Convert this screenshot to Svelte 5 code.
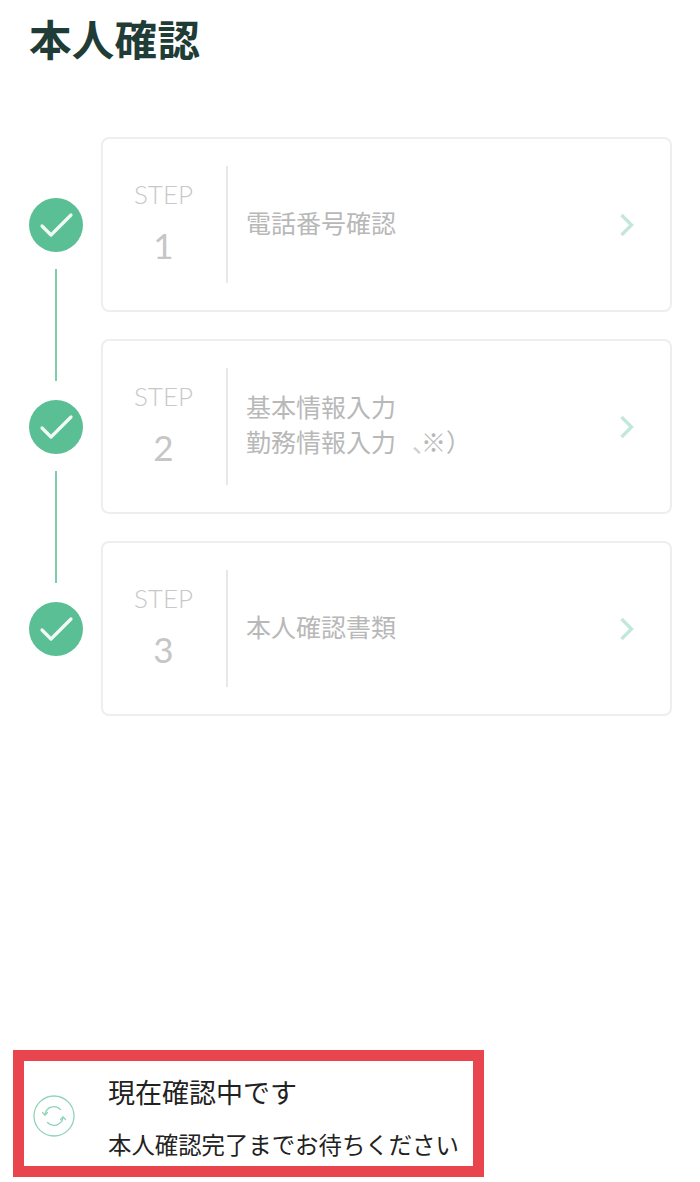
<script lang="ts">
  const steps = [
    { no: 1, lines: [{ text: '電話番号確認' }] },
    { no: 2, lines: [{ text: '基本情報入力' }, { text: '勤務情報入力', tail: '※）' }] },
    { no: 3, lines: [{ text: '本人確認書類' }] },
  ];
</script>

<div class="page">
  <h1>本人確認</h1>

  <ol class="steps">
    {#each steps as step, i}
      <li class="step" class:has-line={i < steps.length - 1}>
        <div class="mark">
          <div class="circle">
            <svg viewBox="0 0 54 54" fill="none"><path d="m13 28 9 9 20-20" stroke="#f2faf6" stroke-width="3.2" stroke-linecap="round" stroke-linejoin="round"/></svg>
          </div>
        </div>
        <div class="card">
          <div class="num">
            <span class="label">STEP</span>
            <span class="digit">{step.no}</span>
          </div>
          <div class="name">
            {#each step.lines as line}
              <div>{line.text}{#if line.tail}<span class="rem">、</span>{line.tail}{/if}</div>
            {/each}
          </div>
          <svg class="chev" viewBox="0 0 16 24" fill="none"><path d="m2.5 2 10 10-10 10" stroke="#c3e8da" stroke-width="3.4"/></svg>
        </div>
      </li>
    {/each}
  </ol>

  <div class="status">
    <svg class="sync" viewBox="0 0 42 42" fill="none" stroke="#8fd3b8" stroke-width="1.3">
      <circle cx="21" cy="21" r="20"/>
      <path d="M12 20a9 9 0 0 1 15.5-5.5" stroke-linecap="round"/>
      <path d="M30 22a9 9 0 0 1-15.5 5.5" stroke-linecap="round"/>
      <path d="m9.5 17.5 2.5 2.5 2.5-2.5" stroke-linecap="round" stroke-linejoin="round"/>
      <path d="m27.5 24.5 2.5-2.5 2.5 2.5" stroke-linecap="round" stroke-linejoin="round"/>
    </svg>
    <div class="status-text">
      <div class="status-main">現在確認中です</div>
      <div class="status-sub">本人確認完了までお待ちください</div>
    </div>
  </div>
</div>

<style>
  :global(body) { background: #fff; }

  .page {
    height: 1182px;
    box-sizing: border-box;
    display: flex;
    flex-direction: column;
    font-family: "Noto Sans CJK JP", "Noto Sans", sans-serif;
    overflow: hidden;
  }

  h1 {
    margin: 0;
    padding: 10px 0 0 29px;
    font-size: 42.5px;
    line-height: 56px;
    font-weight: 700;
    letter-spacing: 0.3px;
    color: #1f3d36;
  }

  .steps {
    list-style: none;
    margin: 71px 0 0;
    padding: 0 28px 0 29px;
    display: flex;
    flex-direction: column;
    gap: 27px;
  }

  .step {
    position: relative;
    display: flex;
    align-items: center;
  }
  .has-line::after {
    content: '';
    position: absolute;
    left: 26px;
    top: 132px;
    width: 2px;
    height: 112px;
    background: #7fcbab;
  }

  .mark { width: 72px; flex: none; }
  .circle {
    width: 54px;
    height: 54px;
    border-radius: 50%;
    background: #5bbf95;
  }
  .circle svg { display: block; width: 54px; height: 54px; }

  .card {
    flex: 1;
    height: 175px;
    box-sizing: border-box;
    border: 2px solid #eeeeee;
    border-radius: 8px;
    display: flex;
    align-items: center;
    padding: 0 35px 0 0;
    background: #fff;
  }

  .num {
    width: 125px;
    height: 117px;
    flex: none;
    box-sizing: border-box;
    border-right: 2px solid #e8e8e8;
    display: flex;
    flex-direction: column;
    align-items: center;
    color: #c8c8c8;
  }
  .label {
    font-family: "Lato", sans-serif;
    font-weight: 300;
    font-size: 26px;
    line-height: 30px;
    margin-top: 13px;
    padding-right: 2px;
  }
  .digit {
    font-family: "Lato", sans-serif;
    font-size: 35px;
    line-height: 42px;
    margin-top: 15px;
    padding-right: 2px;
    color: #c6c6c6;
  }

  .name {
    flex: 1;
    padding: 0 0 5px 18px;
    font-size: 25px;
    line-height: 35px;
    color: #b8b8b8;
    font-weight: 400;
  }
  .rem {
    padding-left: 16px;
    letter-spacing: -16px;
    color: #cfcfcf;
  }

  .chev { width: 16px; height: 24px; flex: none; }

  .status {
    margin: auto 0 5px 13px;
    width: 471px;
    height: 127px;
    box-sizing: border-box;
    border: 11px solid #e8454f;
    display: flex;
    align-items: center;
    background: #fff;
  }
  .sync { width: 42px; height: 42px; flex: none; margin: 4px 0 0 9px; }
  .status-text { margin-left: 33px; padding-top: 7px; color: #222; }
  .status-main { font-size: 27px; line-height: 36px; }
  .status-sub { font-size: 23.4px; line-height: 32px; margin-top: 18px; white-space: nowrap; }
</style>
